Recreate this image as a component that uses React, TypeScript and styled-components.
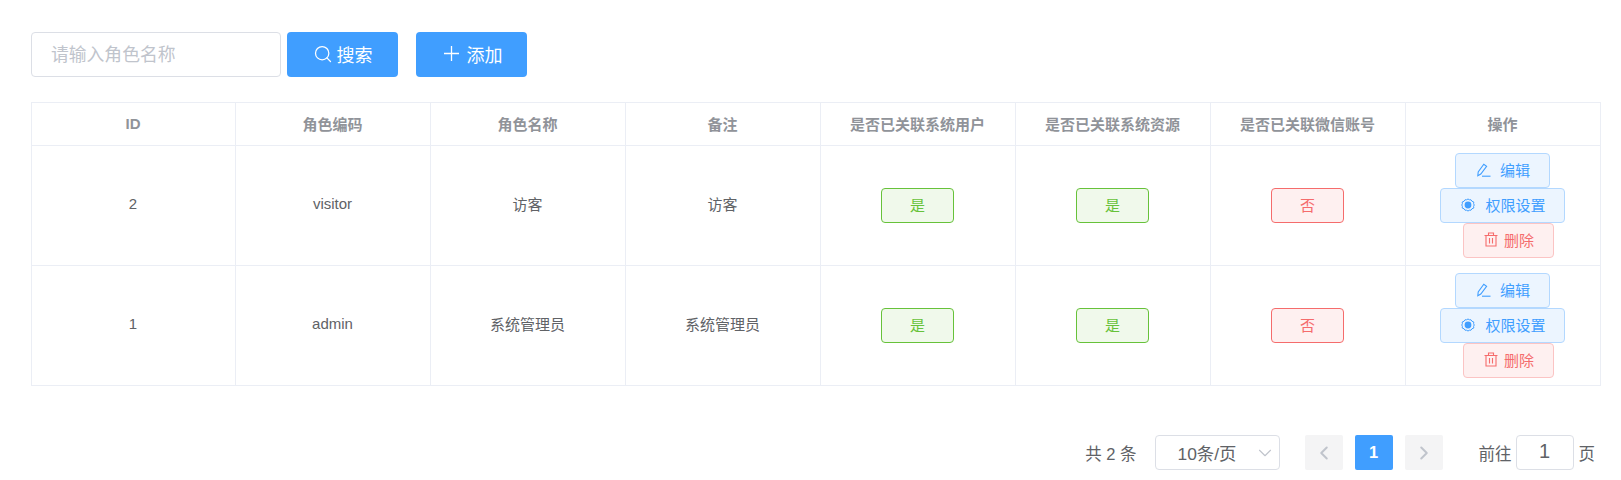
import React from "react";
import styled, { createGlobalStyle } from "styled-components";
import { Search, ChevronLeft, ChevronRight, ChevronDown } from "lucide-react";

const Global = createGlobalStyle`
  html, body { margin: 0; padding: 0; background: #fff; }
  body { font-family: "Liberation Sans", "Noto Sans CJK SC", sans-serif; color: #606266; }
  * { box-sizing: border-box; }
`;

const Page = styled.div`
  padding: 32px 20px 0 31px;
  width: 1621px;
  height: 480px;
  overflow: hidden;
`;

const Toolbar = styled.div`
  display: flex;
  align-items: center;
  height: 45px;
  margin-bottom: 25px;
`;

const SearchInput = styled.div`
  width: 250px;
  height: 45px;
  border: 1px solid #dcdfe6;
  border-radius: 4px;
  padding: 0 0 3px 19px;
  display: flex;
  align-items: center;
  font-size: 17.8px;
  color: #c0c4cc;
  margin-right: 6px;
`;

const PrimaryButton = styled.div<{ $after?: number; $gap: number; $nudge?: number }>`
  width: 111px;
  height: 45px;
  background: #409eff;
  border-radius: 4px;
  color: #fff;
  font-size: 18px;
  display: flex;
  align-items: center;
  justify-content: center;
  gap: ${(p) => p.$gap}px;
  padding: 0 0 2px ${(p) => p.$nudge ?? 0}px;
  margin-right: ${(p) => p.$after ?? 0}px;
`;

const Table = styled.table`
  width: 1570px;
  table-layout: fixed;
  border-collapse: collapse;
`;

const Th = styled.th`
  height: 43px;
  border: 1px solid #ebeef5;
  color: #909399;
  font-weight: 700;
  font-size: 15px;
  text-align: center;
  padding: 0 1px 2px 0;
`;

const Td = styled.td`
  height: 120px;
  border: 1px solid #ebeef5;
  text-align: center;
  padding: 0 1px 4px 0;
  color: #606266;
  font-size: 15px;
`;

const StatusCell = styled(Td)`
  padding: 0 1px 0 0;
`;

const StatusTag = styled.div<{ $ok: boolean }>`
  display: inline-flex;
  align-items: center;
  justify-content: center;
  width: 73px;
  height: 35px;
  border-radius: 4px;
  font-size: 15px;
  padding-bottom: 3px;
  border: 1px solid ${(p) => (p.$ok ? "#67c23a" : "#f56c6c")};
  background: ${(p) => (p.$ok ? "#f0f9eb" : "#fef0f0")};
  color: ${(p) => (p.$ok ? "#67c23a" : "#f56c6c")};
`;

const Actions = styled.div`
  display: flex;
  flex-direction: column;
  align-items: center;
`;

const ActionButton = styled.div<{ $danger?: boolean; $w: number; $gap: number; $offset?: number }>`
  display: flex;
  align-items: center;
  justify-content: center;
  gap: ${(p) => p.$gap}px;
  width: ${(p) => p.$w}px;
  height: 35px;
  font-size: 15px;
  padding-bottom: 2px;
  border-radius: 4px;
  border: 1px solid ${(p) => (p.$danger ? "#fbc4c4" : "#b3d8ff")};
  background: ${(p) => (p.$danger ? "#fef0f0" : "#ecf5ff")};
  color: ${(p) => (p.$danger ? "#f56c6c" : "#409eff")};
  margin-left: ${(p) => p.$offset ?? 0}px;
`;

const Pager = styled.div`
  display: flex;
  justify-content: flex-end;
  align-items: center;
  height: 35px;
  margin-top: 49px;
  font-size: 16.5px;
  color: #606266;
  padding-right: 6px;
`;

const Total = styled.span`
  margin-right: 18px;
`;

const SizeSelect = styled.div`
  width: 125px;
  height: 35px;
  border: 1px solid #dcdfe6;
  border-radius: 4px;
  display: flex;
  align-items: center;
  padding: 0 3px 0 22px;
  justify-content: space-between;
  margin-right: 25px;
  font-size: 17.4px;
`;

const PageBtn = styled.div<{ $active?: boolean }>`
  width: 38px;
  height: 35px;
  border-radius: 2px;
  display: flex;
  align-items: center;
  justify-content: center;
  font-weight: 700;
  background: ${(p) => (p.$active ? "#409eff" : "#f4f4f5")};
  color: ${(p) => (p.$active ? "#fff" : "#c0c4cc")};
  margin-right: 12px;
`;

const JumpLabel = styled.span`
  margin-left: 24px;
`;

const JumpInput = styled.div`
  width: 58px;
  height: 35px;
  margin: 0 5px 0 4px;
  border: 1px solid #dcdfe6;
  border-radius: 4px;
  display: flex;
  align-items: center;
  justify-content: center;
  font-size: 20px;
  padding-bottom: 2px;
`;

const PlusIcon = () => (
  <svg width="15" height="15" viewBox="0 0 15 15" stroke="currentColor" strokeWidth="1.3" fill="none">
    <path d="M7.5 0 V15 M0 7.5 H15" />
  </svg>
);

const PencilIcon = () => (
  <svg width="16" height="14" viewBox="-2 0 16 14" fill="none" stroke="currentColor" strokeWidth="1.1">
    <path d="M1.2 9 L0.8 12.8 L3.8 11 L9.6 3.4 L6.8 1.2 Z" />
    <path d="M5 13.2 H13.5" />
  </svg>
);

const GearDotIcon = () => (
  <svg width="16" height="14" viewBox="-2 0 16 14" fill="none" stroke="currentColor">
    <path
      d="M4 1.8 Q5.5 2.2 7 1 Q8.5 2.2 10 1.8 Q10.5 3.6 12.8 4 Q12.2 5.5 13.2 7 Q12.2 8.5 12.8 10 Q10.5 10.4 10 12.2 Q8.5 11.8 7 13 Q5.5 11.8 4 12.2 Q3.5 10.4 1.2 10 Q1.8 8.5 .8 7 Q1.8 5.5 1.2 4 Q3.5 3.6 4 1.8 Z"
      strokeWidth="1"
    />
    <circle cx="7" cy="7" r="3.4" fill="currentColor" stroke="none" />
  </svg>
);

const BinIcon = () => (
  <svg width="15" height="15" viewBox="-1 0 15 15" fill="none" stroke="currentColor" strokeWidth="1.1">
    <path d="M0.5 3.5 H13.5 M4.5 3.5 V1 H9.5 V3.5 M2 3.5 V14 H12 V3.5 M5.5 6 V11.5 M8.5 6 V11.5" />
  </svg>
);

const rows = [
  { id: 2, code: "visitor", name: "访客", note: "访客" },
  { id: 1, code: "admin", name: "系统管理员", note: "系统管理员" },
];

const heads = ["ID", "角色编码", "角色名称", "备注", "是否已关联系统用户", "是否已关联系统资源", "是否已关联微信账号", "操作"];

export default function App() {
  return (
    <Page>
      <Global />
      <Toolbar>
        <SearchInput>请输入角色名称</SearchInput>
        <PrimaryButton $after={18} $gap={4}>
          <Search size={20} strokeWidth={1.5} />
          搜索
        </PrimaryButton>
        <PrimaryButton $gap={8} $nudge={3}>
          <PlusIcon />
          添加
        </PrimaryButton>
      </Toolbar>
      <Table>
        <colgroup>
          <col style={{ width: 204 }} />
          {heads.slice(1).map((h) => (
            <col key={h} style={{ width: 195 }} />
          ))}
        </colgroup>
        <thead>
          <tr>
            {heads.map((h) => (
              <Th key={h}>{h}</Th>
            ))}
          </tr>
        </thead>
        <tbody>
          {rows.map((r) => (
            <tr key={r.id}>
              <Td>{r.id}</Td>
              <Td>{r.code}</Td>
              <Td>{r.name}</Td>
              <Td>{r.note}</Td>
              <StatusCell><StatusTag $ok>是</StatusTag></StatusCell>
              <StatusCell><StatusTag $ok>是</StatusTag></StatusCell>
              <StatusCell><StatusTag $ok={false}>否</StatusTag></StatusCell>
              <StatusCell>
                <Actions>
                  <ActionButton $w={95} $gap={9}><PencilIcon />编辑</ActionButton>
                  <ActionButton $w={125} $gap={10}><GearDotIcon />权限设置</ActionButton>
                  <ActionButton $w={91} $gap={6} $danger $offset={12}><BinIcon />删除</ActionButton>
                </Actions>
              </StatusCell>
            </tr>
          ))}
        </tbody>
      </Table>
      <Pager>
        <Total>共 2 条</Total>
        <SizeSelect>
          10条/页
          <ChevronDown size={22} color="#c0c4cc" strokeWidth={1.2} />
        </SizeSelect>
        <PageBtn><ChevronLeft size={22} strokeWidth={2.2} /></PageBtn>
        <PageBtn $active>1</PageBtn>
        <PageBtn><ChevronRight size={22} strokeWidth={2.2} /></PageBtn>
        <JumpLabel>前往</JumpLabel>
        <JumpInput>1</JumpInput>
        页
      </Pager>
    </Page>
  );
}
